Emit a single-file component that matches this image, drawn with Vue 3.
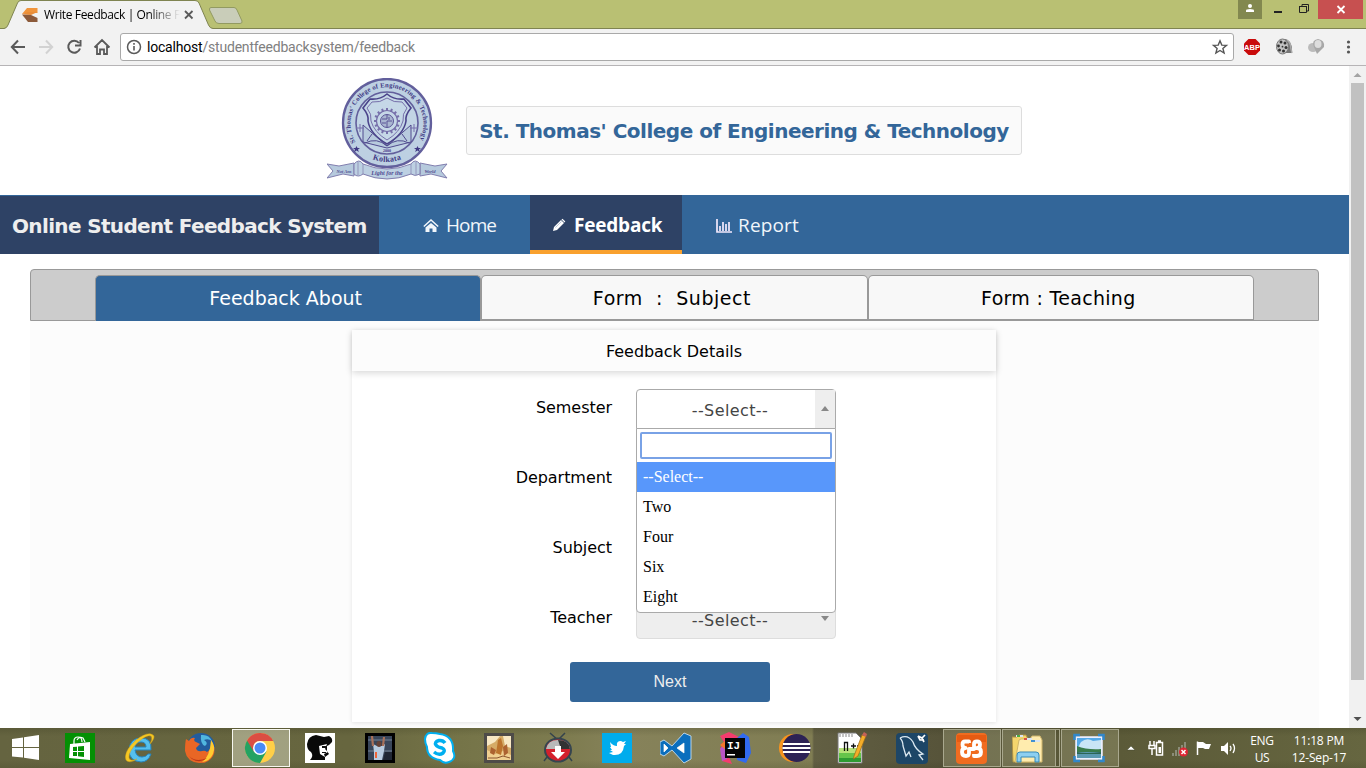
<script setup>
const options = ['--Select--', 'Two', 'Four', 'Six', 'Eight']
const rows = ['Semester', 'Department', 'Subject', 'Teacher']
const apps = [
  ['store', 60], ['ie', 60], ['firefox', 60], ['chrome', 60], ['face', 60], ['player', 60], ['skype', 60],
  ['art', 58], ['ytd', 60], ['twitter', 58], ['vscode', 60], ['intellij', 58], ['eclipse', 62], ['npp', 50],
  ['mysql', 72], ['xampp', 46], ['explorer', 68], ['photo', 54],
]
const gearAngles = Array.from({ length: 16 }, (_, i) => i * 22.5)
</script>

<template>
  <div class="screen">
    <header class="titlebar">
      <svg class="tabshape" width="250" height="30" viewBox="0 0 250 30">
        <path d="M0 28.5H5Q7 28 8 25L17.500 3Q18.500 .5 21 .5H195Q198 .5 199 3L208.500 25Q210 28.500 213 28.500V30H0Z" fill="#f2f2f2" />
        <path d="M0 28.5H4Q7 28 8 25L17.500 3Q18.500 .5 21 .5H195Q198 .5 199 3L208.500 25Q210 28.500 213 28.500H250" fill="none" stroke="#7f8451" />
        <path d="M211 7.500H234Q236 7.500 237 10L242 21Q242.500 23.500 240 23.500H219Q216 23.500 215 21L209.500 10Q209 7.500 211 7.500Z" fill="#c9cdb9" stroke="#929a61" />
        <path d="M27 8H37.500V13H28L22 14Z" fill="#f0943b" />
        <path d="M22 14.500H30L37.500 18V22H28Z" fill="#8c5a3a" /><path d="M22 14L28 12H37.500L31 15Z" fill="#e98d38" />
        <path d="M185 11l7.500 7.500m0-7.500l-7.500 7.500" stroke="#5a5a5a" stroke-width="1.800" />
      </svg>
      <span class="tabtitle">Write Feedback | Online F</span>
      <div class="wincontrols">
        <span class="user"><svg width="24" height="19"><circle cx="12" cy="6" r="2" fill="#fff" /><path d="M8 12V10.500Q8 9 12 9Q16 9 16 10.500V12Z" fill="#fff" /></svg></span>
        <svg width="56" height="19"><path d="M12 11h8v2h-8z" fill="#222" /><path d="M37.500 6.500h7v6h-7zM40 6V4.500h6.500V11H45M37 6.500h8" fill="none" stroke="#222" /></svg>
        <span class="close"><svg width="45" height="19"><path d="M19.500 6l7 7m0-7l-7 7" stroke="#fff" stroke-width="1.800" /></svg></span>
      </div>
    </header>

    <div class="toolbar">
      <svg class="navicons" width="120" height="36" viewBox="0 0 120 36" fill="none" stroke="#5a5a5a" stroke-width="2">
        <path d="M25 18H12M18 11.500L11.800 18L18 24.500" /><path d="M39 18H52M46 11.500L52.200 18L46 24.500" stroke="#d2d2d2" />
        <path d="M79 14A6 6 0 1 0 80 19.500M80.500 11V16.500H75" /><path d="M94.500 18.500L102 11L109.500 18.500M97 17V25H100V20.500H104V25H107V17" stroke-width="1.800" />
      </svg>
      <div class="address">
        <svg width="26" height="26" viewBox="0 0 26 26" fill="none" stroke="#5a5a5a"><circle cx="13" cy="13" r="6.500" stroke-width="1.500" /><path d="M13 12v4.500M13 9v1.700" stroke-width="1.600" /></svg>
        <span class="url"><b>localhost</b>/studentfeedbacksystem/feedback</span>
        <svg class="star" width="26" height="26" viewBox="0 0 26 26"><path d="M13 6.800l1.800 4.300 4.700.3-3.600 3 1.200 4.600-4.100-2.500-4.100 2.500 1.200-4.600-3.600-3 4.700-.3z" fill="none" stroke="#555" stroke-width="1.400" /></svg>
      </div>
      <svg class="extensions" width="130" height="36" viewBox="0 0 130 36">
        <path d="M12.500 10h7l4.500 4.500v7L19.500 26h-7L8 21.500v-7z" fill="#c90b0b" /><text x="16" y="20.800" text-anchor="middle" class="abp">ABP</text>
        <g><path d="M43 11L50 10L54 13L56 18V24H50L43 24Z" fill="#777" /><ellipse cx="46.500" cy="17.500" rx="6" ry="7.500" fill="#c4c4c4" stroke="#777" /><g fill="#333"><circle cx="45" cy="13" r="1.500" /><circle cx="49" cy="14" r="1.500" /><circle cx="50" cy="18.500" r="1.500" /><circle cx="47.500" cy="22" r="1.500" /><circle cx="43.500" cy="21" r="1.500" /><circle cx="42.500" cy="17" r="1.400" /><circle cx="46.500" cy="17.700" r=".9" /></g><path d="M51 11Q55 14 55 20L56 24" fill="none" stroke="#aaa" stroke-width="1.500" /></g>
        <g><ellipse cx="77" cy="18.500" rx="5" ry="4.500" fill="#bbb" /><path d="M82 10Q89 11 88 18L81 25L78 18Q75 11 82 10Z" fill="#a8a8a8" /><ellipse cx="82" cy="15" rx="3.500" ry="4" fill="#ddd" /></g>
        <g fill="#555"><circle cx="112.500" cy="13" r="1.600" /><circle cx="112.500" cy="18" r="1.600" /><circle cx="112.500" cy="23" r="1.600" /></g>
      </svg>
    </div>

    <div class="viewport">
      <main class="page">
        <section class="banner">
          <svg class="seal" width="122" height="104" viewBox="0 0 122 104">
            <defs><path id="arcTop" d="M29 65A36.500 36.500 0 1 1 91 65" /><path id="arcBottom" d="M33 73A39 39 0 0 0 87 73" /></defs>
            <circle cx="60" cy="45" r="44" fill="#bdd0e2" stroke="#625f9c" stroke-width="2.300" />
            <circle cx="60" cy="45" r="31" fill="#c2d4e5" stroke="#625f9c" stroke-width="1.600" />
            <text class="sealtext"><textPath href="#arcTop" startOffset="1" textLength="150" lengthAdjust="spacing">St. Thomas' College of Engineering &amp; Technology</textPath></text>
            <text class="sealtext kol"><textPath href="#arcBottom" startOffset="50%" text-anchor="middle">Kolkata</textPath></text>
            <g fill="#403984"><path d="M29.500 68l1 2h2.500l-2 1.500.8 2.500-2.300-1.400-2.300 1.400.8-2.500-2-1.500h2.500z" /><path d="M90.500 68l1 2h2.500l-2 1.500.8 2.500-2.300-1.400-2.300 1.400.8-2.500-2-1.500h2.500z" /></g>
            <path d="M36 64V47L60 68L84 47V64L60 70Z" fill="#b7cadd" stroke="#504a8e" /><path d="M38 65Q50 59 60 68Q70 59 82 65M45 56L40 63M75 56L80 63" fill="none" stroke="#504a8e" />
            <path d="M60 16Q67 22 77 21L84 30Q78 37 79 43Q77 56 60 66Q43 56 41 43Q42 37 36 30L43 21Q53 22 60 16Z" fill="#c5d7e7" stroke="#4a438a" stroke-width="1.600" />
            <path d="M60 20Q67 25 75 24L80 30Q75 36 76 43Q73 54 60 62Q47 54 44 43Q45 36 40 30L45 24Q53 25 60 20Z" fill="none" stroke="#766faa" />
            <g transform="translate(60 43)"><path v-for="a in gearAngles" :key="a" d="M0-13V-10" :transform="`rotate(${a})`" stroke="#766faa" stroke-width="2" /><circle r="10.500" fill="none" stroke="#766faa" stroke-width="1.200" /><circle r="6.500" fill="#a9b6d1" stroke="#5a5496" /><path d="M-5-2H0V-6M0 6V0H5M-5 2H-1M2-4V-1" stroke="#5a5496" fill="none" /></g>
            <path d="M29 50h8m-4-4v8M83 50h8m-4-4v8" stroke="#776fac" />
            <text x="60" y="74" class="year">2000</text>
            <path d="M0 86L12 88L27 85V98L16 96L0 100L6 93ZM120 86L108 88L93 85V98L104 96L120 100L114 93Z" fill="#b6cadd" stroke="#817eae" />
            <path d="M27 86Q32 80 36 86Q60 96 84 86Q88 80 93 86V96Q88 99 84 96Q60 106 36 96Q31 100 27 96Z" fill="#bdd0e2" stroke="#817eae" />
            <path d="M36 86V96M84 86V96M31 84V97M89 84V97" stroke="#817eae" stroke-width=".7" />
            <text x="60" y="97" class="motto">Light for the</text><text x="17" y="94.500" class="motto small">Not Ans</text><text x="103" y="94.500" class="motto small">World</text>
          </svg>
          <h1>St. Thomas' College of Engineering &amp; Technology</h1>
        </section>

        <nav class="mainnav">
          <div class="brand">Online Student Feedback System</div>
          <a class="home"><svg width="16" height="14" viewBox="0 0 16 14"><path d="M.8 7.500L8 1L15.200 7.500" fill="none" stroke="#f1f6fb" stroke-width="1.500" /><path d="M2.500 8.500L8 4L13.500 8.500V13H9.500V9.500H6.500V13H2.500Z" fill="#f1f6fb" /></svg><span>Home</span></a>
          <a class="feedback"><svg width="14" height="14" viewBox="0 0 14 14"><path d="M1 13L2 9L9 2L12 5L5 12Z" fill="#fff" /><path d="M9.500 1.500L10.500.8L13.300 3.500L12.500 4.500Z" fill="#fff" /><path d="M3.500 9.500L9.500 3.500" stroke="#9fb0c9" stroke-width=".7" /></svg><span>Feedback</span></a>
          <a class="report"><svg width="16" height="14" viewBox="0 0 16 14"><path d="M1 0V13H16M4 12V7M7 12V3M10 12V5M13 12V3" fill="none" stroke="#f2e9fd" stroke-width="1.700" /></svg><span>Report</span></a>
        </nav>

        <div class="wizard">
          <div class="tabs">
            <div class="tab active"><span>Feedback About</span></div>
            <div class="tab subject"><span>Form&nbsp; :&nbsp; Subject</span></div>
            <div class="tab teaching"><span>Form : Teaching</span></div>
          </div>
          <div class="wizardbody">
            <form class="card">
              <h2>Feedback Details</h2>
              <div class="fields">
                <div v-for="(r, i) in rows" :key="r" class="row">
                  <label>{{ r }}</label>
                  <div class="select" :class="{ open: i === 0 }"><span><template v-if="i === 0 || i === 3">--Select--</template></span><i><svg width="8" height="6"><path :d="i === 0 ? 'M0 5L4 0L8 5Z' : 'M0 0H8L4 5Z'" fill="#888" /></svg></i>
                    <div v-if="i === 0" class="dropdown"><div class="search"></div><div v-for="(o, j) in options" :key="o" class="option" :class="{ chosen: j === 0 }">{{ o }}</div></div>
                  </div>
                </div>
              </div>
              <div class="next">Next</div>
            </form>
          </div>
        </div>
      </main>
      <div class="scrollbar">
        <svg width="17" height="17"><path d="M4.500 11L8.500 7L12.500 11Z" fill="#a3a3a3" /></svg><div class="thumb"></div><svg class="down" width="17" height="17"><path d="M4.500 6L8.500 10L12.500 6Z" fill="#505050" /></svg>
      </div>
    </div>

    <footer class="taskbar">
      <div class="start"><svg width="28" height="26" viewBox="0 0 28 26" fill="#fff"><path d="M0 4L11 2.500V12H0zM12 2.300L27 0V12H12zM0 13H11V22.500L0 21.500zM12 13H27V25L12 22.800z" /></svg></div>
      <div v-for="a in apps" :key="a[0]" class="app" :class="a[0]" :style="{ width: a[1] + 'px' }">
        <svg width="32" height="32" viewBox="0 0 32 32">
          <g v-if="a[0] === 'store'"><path d="M1 1h30v30H1z" fill="#049004" /><path d="M6 12L26 10V28L5 26Z" fill="#fff" /><path d="M10 12V9Q10 5 14 5Q18 5 18 10M13 8Q15 4 19 6L21 10" fill="none" stroke="#fff" stroke-width="1.200" /><path d="M9 15l4-.3V19H9zm5-.4l6-.6v5h-6zM9 20h4v4H9zm5 0h6v5l-6-.7z" fill="#049004" /></g>
          <g v-else-if="a[0] === 'ie'"><path d="M27 18H11Q12 25 18 25Q22 25 24 22H27Q24 30 17 30Q5 29 5 18Q6 6 17 6Q28 6 27 18ZM11 15H22Q22 10 17 10Q12 10 11 15" fill="#55bfee" fill-rule="evenodd" stroke="#2684bd" /><path d="M29 3Q24-1 12 8Q-1 20 2 28Q5 32 13 27Q6 30 5 26Q4 20 13 11Q23 2 27 4Q29 7 26 12Q32 5 29 3Z" fill="#f5c824" stroke="#d7a516" stroke-width=".5" /></g>
          <g v-else-if="a[0] === 'firefox'"><circle cx="17" cy="15" r="14" fill="#235c9d" /><path d="M17 3Q25 2 28 9Q24 6 20 8Q25 11 21 14Q16 12 17 3" fill="#51b7df" /><path d="M2 7L5 9Q7 5 11 6Q9 9 12 10L16 12L12 16Q13 20 18 19Q21 18 23 20Q28 17 27 9Q33 16 29 24Q24 32 15 31Q3 30 1 19Q1 11 2 7Z" fill="#e96625" /><path d="M27 8Q32 14 29 22Q26 29 18 30Q26 25 27 8" fill="#ffcb31" /><path d="M5 24Q12 31 23 26Q16 32 8 27" fill="#b83418" /></g>
          <g v-else-if="a[0] === 'chrome'"><circle cx="16" cy="16" r="15" fill="#ffcf48" /><path d="M16 16L3 8.500A15 15 0 0 0 16 31L22.500 19.500Z" fill="#24a262" /><path d="M16 9H29.300A15 15 0 0 0 3 8.500L10 20Q8 9 16 9Z" fill="#db4e43" /><circle cx="16" cy="16" r="7" fill="#fff" /><circle cx="16" cy="16" r="5.500" fill="#4a8bf5" /></g>
          <g v-else-if="a[0] === 'face'"><path d="M1 1h30v30H1z" fill="#fff" /><path d="M3 12Q4 4 12 3L20 5L25 4Q29 6 28 10L25 13L23 14V19L25 22L21 25V28H6Q10 24 7 20Q3 18 3 12Z" fill="#090909" /><path d="M15 14L23 12L21 17L24 20L20 22L21 25L16 22Z" fill="#fff" /><path d="M18 14h4v2h-4M18 20h4v1h-4" fill="#111" /></g>
          <g v-else-if="a[0] === 'player'"><path d="M1 1h30v30H1z" fill="#000" /><path d="M4 4h24v24H4z" fill="#39465a" /><path d="M4 7h24v2H4zm0 11h24v2H4z" fill="#566477" /><path d="M9 12L13 14H18L21 12L20 19L18 28H10V20Z" fill="#b9cce0" /><path d="M8 4L9 14M20 5L19 14" stroke="#a9715a" stroke-width="2.200" /><ellipse cx="15" cy="12" rx="2.500" ry="3" fill="#654238" /><path d="M12 20v6" stroke="#ed6539" stroke-width="2" /><path d="M21 20h7v8h-9z" fill="#202735" /></g>
          <g v-else-if="a[0] === 'skype'"><path d="M8 1Q2 0 1 7Q1 11 3 15Q3 26 16 28Q20 32 25 30Q33 27 29 19Q30 4 16 2Q12 1 8 1Z" fill="#fff" stroke="#00aff0" stroke-width="2" /><path d="M21 11Q19 8 15 8.500Q10 10 12 13Q13 15 18 16Q22 18 19 21Q15 24 10 20" fill="none" stroke="#00aff0" stroke-width="3.500" /></g>
          <g v-else-if="a[0] === 'art'"><path d="M1 1h30v30H1z" fill="#4e4b48" /><path d="M4 4h24v24H4z" fill="#d5ab67" /><path d="M4 4H17L12 10L4 14ZM20 4H28V16L22 14Z" fill="#f8e8c4" /><path d="M4 18L12 22L20 19L28 23V28H4Z" fill="#f0cf90" /><path d="M15 8L18 6L20 14L18 23L13 21L14 15Z" fill="#bc742d" /><path d="M8 15L13 18L11 23L7 21ZM20 15L24 12L25 21L21 24Z" fill="#ac6230" /><path d="M5 26H14L20 24L27 26" stroke="#8b5530" fill="none" /></g>
          <g v-else-if="a[0] === 'ytd'"><path d="M8 1L16 8L23 1M5 25L2 29M27 25L30 29" stroke="#34434c" stroke-width="1.500" fill="none" /><ellipse cx="16" cy="18" rx="13" ry="11.500" fill="#d4202c" stroke="#36454f" stroke-width="2" /><path d="M4 17Q6 7 18 8Q27 9 28 17Z" fill="#b9b9b9" /><path d="M16 8Q27 8 28 17H19Z" fill="#333" /><path d="M13 14h6v6h4l-7 7-7-7h4z" fill="#fff" /></g>
          <g v-else-if="a[0] === 'twitter'"><path d="M1 1h30v30H1z" fill="#00aced" /><path d="M9 10Q12 14 16 14Q15 9 20 9L22 10L25 9L23 12L25 12L23 14Q22 24 12 23L8 21L12 20L9 18H11L9 15L10 15Z" fill="#fff" /></g>
          <g v-else-if="a[0] === 'vscode'"><path d="M0 10L4 8L12 14L24 1L31 4V27L24 31L12 18L4 24L0 22ZM4 12V20L8 16ZM24 11L17 16L24 21Z" fill="#0a6ebd" fill-rule="evenodd" stroke="#b9d3e4" /><path d="M4 12V20L8 16ZM24 11L17 16L24 21Z" fill="#fff" /></g>
          <g v-else-if="a[0] === 'intellij'"><path d="M1 4L10 0L20 5L10 25L13 32L3 29L5 23L1 17L5 10Z" fill="#f43c6d" /><path d="M1 17L8 9V27L3 29Z" fill="#b855c6" /><path d="M1 13L7 8V18Z" fill="#f2762c" /><path d="M18 6L24 1L30 5L32 21L27 31L18 28Z" fill="#316af0" /><path d="M6 6h20v20H6z" fill="#050505" /><text x="8" y="17" class="ij">IJ</text><path d="M8 22h8v1.500H8z" fill="#fff" /></g>
          <g v-else-if="a[0] === 'eclipse'"><circle cx="14" cy="16" r="14" fill="#f7941e" /><circle cx="17.500" cy="16" r="14" fill="#2c2255" /><path d="M4 12h27M3.500 16h28M4 20h27" stroke="#fff" stroke-width="2" /></g>
          <g v-else-if="a[0] === 'npp'"><path d="M3 1H21L27 7V31H3Z" fill="#fff" stroke="#777" /><path d="M4 16H26V30H4Z" fill="#b7e27a" /><path d="M4 21H26V30H4Z" fill="#65c44a" /><path d="M4 26H26V30H4Z" fill="#2d9b32" /><path d="M5 2v3m3-3v3m3-3v3m3-3v3m3-3v3" stroke="#888" /><path d="M9.500 19V10.500H12.500V19M16 14h5m-2.500-2.500v5M22 14h5m-2.500-2.500v5" stroke="#111" stroke-width="1.300" fill="none" /><path d="M19 24L27 3L31 4L23 24L18.500 27Z" fill="#f5ad28" stroke="#9b6818" stroke-width=".7" /><path d="M27 3L29 0L32 2L31 5Z" fill="#c56257" /></g>
          <g v-else-if="a[0] === 'mysql'"><rect x="0" y="1" width="32" height="31" rx="4" fill="#1d4667" /><path d="M4 6Q12 2 17 10Q19 17 27 22L23 23L27 28M4 6Q7 9 7 14L10 24L13 20L15 25" fill="none" stroke="#dce9f1" stroke-width="1.300" /><path d="M22 4L26 6L29 3M26 6L28 10M22 4L24 8H28" fill="none" stroke="#fff" stroke-width="1.700" /></g>
          <g v-else-if="a[0] === 'xampp'"><rect x="1" y="1" width="31" height="31" rx="4" fill="#f06c20" /><path d="M2 3H31V10H2Z" fill="#e65b12" /><path d="M14 11V9.500H10Q7.500 9.500 7.500 12.500Q7.500 16 10.500 16Q7 16 7 20Q7 24 11 24Q14 24 14 21V17H19V12Q19 9.500 22 9.500Q25 9.500 25 12.500Q25 16 22 16Q26 16 26 20Q26 24 22 24H19V22" fill="none" stroke="#fff" stroke-width="3.800" stroke-linejoin="round" /></g>
          <g v-else-if="a[0] === 'explorer'"><path d="M0 5H5L7 3H14L16 7H22V30H1Z" fill="#f4d56d" stroke="#ad9046" /><path d="M9 7H18L20 4H28L30 8V30H3L7 8Z" fill="#ffecae" stroke="#cfb56a" /><path d="M4 3h7v2H4zm8 3h8v2h-8zm8 2h8v2h-8z" fill="#d9e5f4" /><path d="M5 3h3v2H5" fill="#4dab44" /><path d="M12 6h3v2h-3" fill="#d95043" /><path d="M19 8h4v2h-4" fill="#4290d0" /><path d="M5 30V23Q5 20 8 20H24Q27 20 27 23V30H23V25H9V30Z" fill="#8dcff0" stroke="#3689b7" /></g>
          <g v-else><path d="M3 5h26v22H3z" fill="#dff0fa" stroke="#eef" stroke-width="1.500" /><path d="M4 6h24v10H4z" fill="#55a9e8" /><path d="M8 10Q14 5 20 9L28 8V17H4Z" fill="#c9e5f6" /><path d="M4 14Q14 18 28 17V20H4Z" fill="#397b4b" /><path d="M4 20h24v6H4z" fill="#5b99b0" /><path d="M4 20Q12 22 28 20V22H4Z" fill="#2b6655" /><path d="M7 3H1.500V8M25 3h5.500v5M1.500 24v5H7M30.500 24v5H25" fill="none" stroke="#3187ca" stroke-width="2.500" /></g>
        </svg>
      </div>
      <div class="tray">
        <svg width="112" height="32" viewBox="0 0 112 32">
          <path d="M3 18L7 14L11 18Z" fill="#fff" stroke="#444a30" stroke-width=".5" /><path d="M26 9v4M30 9v4M25 13.500h6v3h-6zM28 17v6" fill="none" stroke="#fff" stroke-width="1.500" /><path d="M32.500 10.500h6v12.500h-6zM34 9h3" fill="none" stroke="#fff" stroke-width="1.500" /><path d="M34.500 15h2.500v6h-2.500z" fill="#fff" />
          <path d="M48 21h2v3h-2zm3-3h2v6h-2zm3-3h2v9h-2zm3-2h2v11h-2zm3-3h2v14h-2z" fill="#8b8d79" /><circle cx="59.500" cy="20" r="4.500" fill="#df2634" /><path d="M57.500 18l4 4m0-4l-4 4" stroke="#fff" stroke-width="1.500" />
          <path d="M73.500 9.500V23" stroke="#fff" stroke-width="1.500" /><path d="M74 10H79L82 12H87L85 17H81L79 16H74Z" fill="#fff" /><path d="M97 14H100L104 10V23L100 19H97Z" fill="#fff" /><path d="M106 14Q108 16 106 19M109 12Q112 16 109 21" fill="none" stroke="#fff" stroke-width="1.300" />
        </svg>
        <div class="lang">ENG<br>US</div><div class="clock">11:18 PM<br>12-Sep-17</div>
      </div>
    </footer>
  </div>
</template>

<style>
body { margin: 0; overflow: hidden; }
</style>
<style scoped>
* { box-sizing: border-box; }
svg { display: block; flex: none; }
.screen { width: 1366px; height: 768px; overflow: hidden; display: flex; flex-direction: column; background: #fff; }
.titlebar { height: 29px; flex: none; background: #b9c073; border-bottom: 1px solid #7f8451; display: flex; position: relative; }
.tabshape { position: absolute; left: 0; top: 0; }
.tabtitle { position: absolute; left: 44px; top: 7px; white-space: nowrap; font: 12px/16px "Open Sans", sans-serif; letter-spacing: -.38px; background: linear-gradient(90deg, #000 104px, transparent 136px); background-clip: text; color: transparent; }
.wincontrols { margin-left: auto; margin-right: 3px; display: flex; }
.user { height: 19px; background: #82884f; }
.close { height: 19px; background: #c75050; }
.toolbar { height: 37px; flex: none; background: #f2f2f2; border-bottom: 1px solid #b6b4b6; display: flex; align-items: center; }
.address { width: 1114px; height: 28px; border: 1px solid #a9a9a9; border-radius: 3px; background: #fff; display: flex; align-items: center; }
.url { font: 14px/20px Roboto, sans-serif; letter-spacing: -.2px; color: #808080; }
.url b { color: #000; font-weight: 400; }
.star { margin-left: auto; }
.extensions { margin-left: 2px; }
.abp { font: bold 7.500px "Liberation Sans", sans-serif; fill: #fff; }
.viewport { height: 662px; flex: none; display: flex; }
.page { width: 1349px; overflow: hidden; background: #fff; font-family: "DejaVu Sans", sans-serif; }
.banner { height: 129px; display: flex; justify-content: center; align-items: flex-start; gap: 17px; padding-top: 10px; }
.seal { margin-top: 2px; }
.sealtext { font: bold 6.700px "Liberation Serif", serif; fill: #403984; }
.kol { font-size: 8px; letter-spacing: .3px; }
.year { font: bold 4px "Liberation Serif", serif; fill: #403984; text-anchor: middle; }
.motto { font: bold italic 6px "Liberation Serif", serif; fill: #4f4a91; text-anchor: middle; }
.small { font-size: 4.500px; }
h1 { width: 556px; height: 49px; margin: 30px 0 0; border: 1px solid #ddd; border-radius: 3px; background: #fafafa; color: #336699; font-size: 20px; line-height: 48px; letter-spacing: -.5px; text-align: center; white-space: nowrap; }
.mainnav { height: 59px; background: #336699; display: flex; color: #f1f6fb; }
.brand { width: 379px; margin-top: 1px; padding-left: 12px; background: #2e4265; color: #eee; font-size: 20px; font-weight: bold; line-height: 60px; letter-spacing: -.65px; white-space: nowrap; }
.mainnav a { height: 59px; display: flex; align-items: center; font: 19px/25px "Open Sans", "Noto Sans", sans-serif; padding-top: 2px; }
.mainnav .home { width: 151px; padding-left: 44px; gap: 7px; letter-spacing: -.9px; }
.mainnav .feedback { width: 152px; padding-left: 22px; padding-top: 5px; gap: 8px; background: #2e4265; border-bottom: 4px solid #f9a12e; color: #fff; font-weight: bold; letter-spacing: -.2px; }
.report { padding-left: 34px; gap: 6px; letter-spacing: .15px; }
.wizard { width: 1289px; margin: 15px 0 0 30px; }
.tabs { height: 52px; border: 1px solid #999; border-radius: 4px 4px 0 0; background: #ccc; padding: 5px 64px 0; display: flex; }
.tab { flex: 1; height: 46px; padding-right: 5px; border: 1px solid #999; border-bottom-width: 2px; border-radius: 5px 5px 0 0; background: #f8f8f8; font-size: 19px; line-height: 44px; text-align: center; color: #000; white-space: pre; }
.tab.active { background: #336699; color: #fff; border-bottom: 0; }
.subject { letter-spacing: .55px; }
.teaching { letter-spacing: .3px; }
.wizardbody { height: 408px; background: #fcfcfc; padding: 9px 0 0 322px; }
.card { width: 644px; height: 392px; background: #fff; box-shadow: 0 1px 4px rgba(0,0,0,.1); }
h2 { margin: 0; height: 41px; background: #fcfcfc; font-size: 16px; font-weight: 400; line-height: 44px; letter-spacing: -.05px; text-align: center; box-shadow: 0 2px 7px rgba(0,0,0,.16); }
.fields { padding-top: 18px; }
.row { height: 70px; display: flex; gap: 24px; }
label { width: 260px; text-align: right; font-size: 16px; line-height: 38px; letter-spacing: -.05px; }
.select { position: relative; width: 200px; height: 40px; border: 1px solid #ddd; border-radius: 4px; background: #eee; display: flex; color: #444; font-size: 16px; }
.select > span { flex: 1; padding-left: 8px; text-align: center; line-height: 41px; letter-spacing: .4px; }
.select i { width: 20px; display: flex; align-items: center; justify-content: center; }
.select.open { background: #fff; border-color: #aaa; border-radius: 4px 4px 0 0; }
.open i { background: #eee; }
.dropdown { position: absolute; left: -1px; top: 38px; width: 200px; height: 185px; padding-top: 3px; border: 1px solid #aaa; border-radius: 0 0 4px 4px; background: #fff; z-index: 2; }
.search { height: 27px; margin: 0 3px 3px; border: 2px solid #79a2e6; border-radius: 2px; }
.option { height: 30px; padding-left: 6px; font: 16px/30px "Liberation Serif", serif; color: #000; }
.option.chosen { background: #5897fb; color: #fff; }
.next { width: 200px; height: 40px; margin: -7px 0 0 218px; border-radius: 3px; background: #336699; color: #eee; font: 16px/39px "Liberation Sans", sans-serif; text-align: center; }
.scrollbar { width: 17px; background: #f1f1f1; display: flex; flex-direction: column; }
.thumb { width: 13px; height: 597px; margin-left: 2px; background: #c1c1c1; }
.down { margin-top: auto; }
.taskbar { height: 40px; flex: none; display: flex; align-items: center; background: linear-gradient(180deg, rgba(35,36,15,.16), transparent 20% 80%, rgba(35,36,15,.12)), linear-gradient(90deg, #656440 0, #67663f 350px, #757448 460px, #7e7c50 570px, #86825a 625px, #807d53 812px, #625f43 814px, #57543a 940px, #5b5a38 1120px, #666640 1366px); }
.start { width: 50px; padding-left: 12px; }
.app { height: 40px; display: flex; align-items: center; justify-content: center; position: relative; flex: none; }
.app svg { position: relative; z-index: 1; }
.chrome::before, .xampp::before, .explorer::before, .photo::before { content: ""; position: absolute; top: 1px; bottom: 1px; left: calc(50% - 28px); width: 56px; border: 1px solid #a9a88e; background: rgba(210,210,170,.23); }
.chrome::before { border-color: #f7f7ef; background: rgba(225,225,200,.48); }
.explorer::before { left: 8px; width: 52px; }
.explorer::after { content: ""; position: absolute; top: 1px; bottom: 1px; left: 60px; width: 5px; border: 1px solid #a9a88e; border-left: 0; }
.tray { height: 40px; display: flex; color: #fff; font: 12px/17px "Open Sans", sans-serif; text-align: center; padding: 4px 0 0 8px; }
.lang { width: 40px; margin-left: 6px; white-space: nowrap; }
.clock { width: 70px; margin-left: 2px; margin-right: 12px; white-space: nowrap; }
.lang { letter-spacing: -.35px; }
.clock { letter-spacing: -.15px; }
.ij { font: bold 11px "Liberation Mono", monospace; fill: #fff; }
</style>
